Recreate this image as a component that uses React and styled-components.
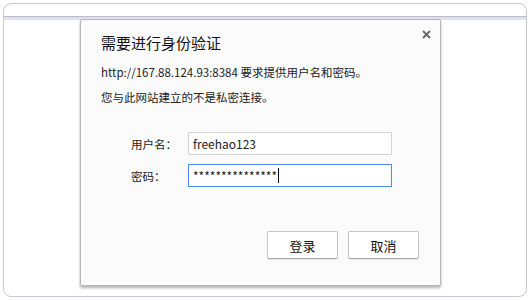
import styled, { createGlobalStyle } from 'styled-components';

const GlobalStyle = createGlobalStyle`
  * { box-sizing: border-box; }
  body {
    margin: 0;
    background: #ffffff;
    font-family: "Noto Sans CJK SC", "Noto Sans", sans-serif;
    color: #222;
  }
`;

const Frame = styled.div`
  position: relative;
  margin: 3px;
  height: 294px;
  border: 1px solid #c9c9d3;
  border-radius: 8px;
  background: #ffffff;
  display: flex;
  flex-direction: column;
  overflow: hidden;
`;

const TopBar = styled.div`
  height: 13px;
  border-bottom: 1px solid #bdbdc9;
`;

const Band = styled.div`
  height: 3px;
  background: #dfe1ef;
`;

const Page = styled.div`
  flex: 1;
`;

const Dialog = styled.div`
  position: absolute;
  left: 76px;
  top: 15px;
  width: 361px;
  height: 267px;
  background: #fbfbfb;
  border: 1px solid #b8b8b8;
  border-radius: 2px;
  box-shadow: 0 2px 3px rgba(0, 0, 0, 0.3);
  display: flex;
  flex-direction: column;
  padding: 13px 21px 0 20px;
`;

const Close = styled.button`
  position: absolute;
  top: 9px;
  right: 9px;
  width: 10px;
  height: 10px;
  padding: 0;
  border: none;
  background: none;
  display: flex;
  align-items: center;
  justify-content: center;
`;

const Title = styled.div`
  font-size: 15px;
  line-height: 20px;
  color: #111;
`;

const Message = styled.div`
  margin-top: 7px;
  font-size: 11.5px;
  line-height: 25px;
  color: #222;
`;

const Form = styled.div`
  margin-top: 22px;
  display: flex;
  flex-direction: column;
  gap: 9px;
`;

const Row = styled.div`
  display: flex;
  align-items: center;
  padding-left: 30px;
`;

const Label = styled.span`
  width: 57px;
  font-size: 11.5px;
  color: #222;
`;

const Field = styled.div`
  width: 204px;
  height: 23px;
  border: 1px solid ${(p) => (p.$focused ? '#4a8cf2' : '#d4d4d4')};
  background: #ffffff;
  display: flex;
  align-items: center;
  padding-left: 4px;
  font-size: 12px;
  color: #222;
`;

const Caret = styled.span`
  display: inline-block;
  width: 1px;
  height: 15px;
  background: #000;
  margin-left: 1px;
`;

const Buttons = styled.div`
  margin-top: 44px;
  display: flex;
  justify-content: flex-end;
  gap: 10px;
`;

const Button = styled.button`
  width: 71px;
  height: 28px;
  border: 1px solid #c4c4c4;
  border-bottom-color: #a8a8a8;
  border-radius: 2px;
  background: #ffffff;
  box-shadow: 0 1px 0 rgba(0, 0, 0, 0.08);
  font-family: "Noto Sans CJK SC", sans-serif;
  font-size: 13px;
  color: #111;
  padding: 0;
`;

export default function App() {
  return (
    <>
      <GlobalStyle />
      <Frame>
        <TopBar />
        <Band />
        <Page />
        <Dialog>
          <Close aria-label="关闭">
            <svg width="9" height="9" viewBox="0 0 9 9">
              <path d="M1 1 L8 8 M8 1 L1 8" stroke="#6b6b6b" strokeWidth="2" />
            </svg>
          </Close>
          <Title>需要进行身份验证</Title>
          <Message>
            http://167.88.124.93:8384 要求提供用户名和密码。
            <br />
            您与此网站建立的不是私密连接。
          </Message>
          <Form>
            <Row>
              <Label>用户名：</Label>
              <Field>freehao123</Field>
            </Row>
            <Row>
              <Label>密码：</Label>
              <Field $focused>
                ***************
                <Caret />
              </Field>
            </Row>
          </Form>
          <Buttons>
            <Button>登录</Button>
            <Button>取消</Button>
          </Buttons>
        </Dialog>
      </Frame>
    </>
  );
}
